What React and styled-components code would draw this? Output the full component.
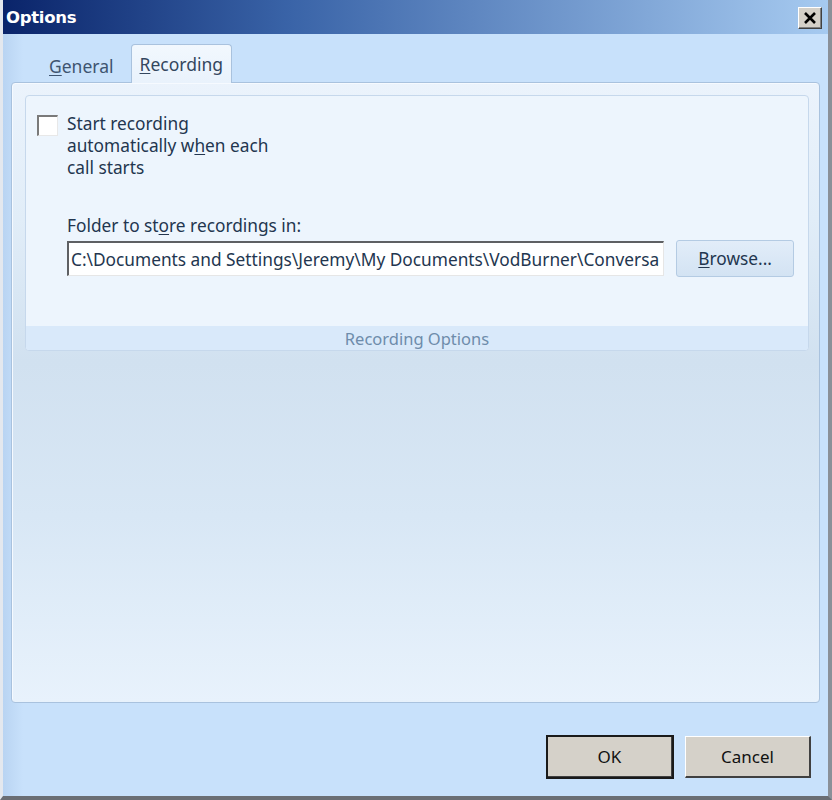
import React from "react";
import styled, { createGlobalStyle } from "styled-components";

const Global = createGlobalStyle`
  html, body { margin: 0; padding: 0; background: #c6dff9; }
  body { width: 832px; height: 800px; overflow: hidden; }
  * { box-sizing: border-box; }
`;

const Window = styled.div`
  width: 832px;
  height: 800px;
  display: flex;
  flex-direction: column;
  background: #c7e0fa;
  border-left: 3px solid #e4e8ee;
  border-right: 4px solid #8a9098;
  border-bottom: 4px solid #6a6e74;
  font-family: "Noto Sans", "Open Sans", sans-serif;
`;

const TitleBar = styled.div`
  height: 34px;
  flex: none;
  display: flex;
  align-items: center;
  justify-content: space-between;
  padding: 0 6px 0 3px;
  background: linear-gradient(to right, #0a246a 0%, #3a64a8 35%, #a6caf0 100%);
`;

const Title = styled.span`
  color: #ffffff;
  font-family: "DejaVu Sans", sans-serif;
  font-weight: bold;
  font-size: 16.5px;
  letter-spacing: -0.3px;
  margin-top: 1px;
`;

const CloseButton = styled.div`
  width: 24px;
  height: 22px;
  margin-top: 2px;
  background: #d4d0c8;
  border-top: 1px solid #ffffff;
  border-left: 1px solid #ffffff;
  border-right: 1px solid #404040;
  border-bottom: 1px solid #404040;
  box-shadow: inset -1px -1px 0 #808080;
  display: flex;
  align-items: center;
  justify-content: center;
`;

const Body = styled.div`
  flex: 1;
  display: flex;
  flex-direction: column;
  padding: 10px 8px 0 8px;
  background: linear-gradient(to right, #b9d4f2 0px, #c8e1fb 20px, #c8e1fb 100%);
`;

const TabStrip = styled.div`
  display: flex;
  align-items: flex-end;
  padding-left: 36px;
  height: 38px;
  gap: 15px;
`;

const Tab = styled.div`
  height: ${(p) => (p.$active ? "39px" : "34px")};
  padding: 0 ${(p) => (p.$active ? "8px" : "1px")};
  display: flex;
  align-items: center;
  font-size: 17.5px;
  color: ${(p) => (p.$active ? "#34475f" : "#3e5470")};
  position: relative;
  z-index: 1;
  margin-bottom: ${(p) => (p.$active ? "-1px" : "0")};
  border: ${(p) => (p.$active ? "1px solid #a9c2de" : "1px solid transparent")};
  border-bottom: none;
  border-radius: 4px 4px 0 0;
  background: ${(p) =>
    p.$active ? "linear-gradient(to bottom, #f2f8fe, #e9f2fc)" : "transparent"};
`;

const Mn = styled.span`
  text-decoration: underline;
  text-underline-offset: 2px;
`;

const TabPanel = styled.div`
  height: 621px;
  border: 1px solid #a9c2de;
  border-radius: 4px;
  padding: 12px 10px 12px 13px;
  background: linear-gradient(
    to bottom,
    #ebf3fc 0%,
    #e1edf8 22%,
    #d1e1f0 45%,
    #d8e7f5 70%,
    #e8f2fc 100%
  );
  box-shadow: inset 1px 1px 0 #f6faff;
`;

const GroupBox = styled.div`
  height: 256px;
  display: flex;
  flex-direction: column;
  border: 1px solid #c6d8ec;
  border-radius: 4px;
  background: #edf5fd;
  overflow: hidden;
`;

const GroupContent = styled.div`
  flex: 1;
  padding: 17px 14px 0 11px;
  display: flex;
  flex-direction: column;
`;

const CheckRow = styled.div`
  display: flex;
  align-items: flex-start;
  gap: 9px;
`;

const CheckBox = styled.div`
  width: 21px;
  height: 21px;
  flex: none;
  margin-top: 2px;
  background: #ffffff;
  border-top: 2px solid #7a7a7a;
  border-left: 2px solid #7a7a7a;
  border-right: 1px solid #e8e8e8;
  border-bottom: 1px solid #e8e8e8;
`;

const Label = styled.div`
  font-size: 17.3px;
  line-height: 22px;
  color: #23364f;
`;

const FolderBlock = styled.div`
  margin-top: 36px;
  padding-left: 30px;
  display: flex;
  flex-direction: column;
  gap: 3px;
`;

const PathRow = styled.div`
  display: flex;
  align-items: center;
  gap: 12px;
`;

const PathInput = styled.div`
  width: 599px;
  height: 35px;
  background: #ffffff;
  border-top: 2px solid #5e6063;
  border-left: 2px solid #5e6063;
  border-right: 1px solid #e6e6e6;
  border-bottom: 1px solid #e6e6e6;
  padding: 0 0 0 2px;
  display: flex;
  align-items: center;
  overflow: hidden;
  white-space: nowrap;
  font-size: 17.3px;
  color: #23364f;
`;

const BrowseButton = styled.div`
  width: 118px;
  height: 37px;
  border: 1px solid #b4cbe3;
  border-radius: 3px;
  background: linear-gradient(to bottom, #e2edf9, #d3e3f3);
  display: flex;
  align-items: center;
  justify-content: center;
  font-size: 17.3px;
  color: #23364f;
`;

const GroupFooter = styled.div`
  height: 24px;
  flex: none;
  background: #d9e9fa;
  display: flex;
  align-items: center;
  justify-content: center;
  font-size: 16.5px;
  color: #6e8cab;
`;

const ButtonBar = styled.div`
  flex: 1;
  display: flex;
  justify-content: flex-end;
  align-items: flex-start;
  gap: 12px;
  padding: 33px 9px 0 0;
`;

const DialogButton = styled.div`
  width: 126px;
  height: 42px;
  display: flex;
  align-items: center;
  justify-content: center;
  background: #d5d1c9;
  font-size: 17px;
  color: #111111;
  border-top: 1px solid #ffffff;
  border-left: 1px solid #ffffff;
  border-right: 2px solid #404040;
  border-bottom: 2px solid #404040;
  outline: ${(p) => (p.$default ? "2px solid #1a1a1a" : "none")};
  outline-offset: -1px;
`;

export default function App() {
  return (
    <>
      <Global />
      <Window>
        <TitleBar>
          <Title>Options</Title>
          <CloseButton>
            <svg width="14" height="12" viewBox="0 0 14 12">
              <path d="M2 1 L12 11 M12 1 L2 11" stroke="#000" strokeWidth="2.6" />
            </svg>
          </CloseButton>
        </TitleBar>
        <Body>
          <TabStrip>
            <Tab>
              <span><Mn>G</Mn>eneral</span>
            </Tab>
            <Tab $active>
              <span><Mn>R</Mn>ecording</span>
            </Tab>
          </TabStrip>
          <TabPanel>
            <GroupBox>
              <GroupContent>
                <CheckRow>
                  <CheckBox />
                  <Label>
                    Start recording
                    <br />
                    automatically w<Mn>h</Mn>en each
                    <br />
                    call starts
                  </Label>
                </CheckRow>
                <FolderBlock>
                  <Label>
                    Folder to st<Mn>o</Mn>re recordings in:
                  </Label>
                  <PathRow>
                    <PathInput>
                      C:\Documents and Settings\Jeremy\My Documents\VodBurner\Conversa
                    </PathInput>
                    <BrowseButton>
                      <span><Mn>B</Mn>rowse...</span>
                    </BrowseButton>
                  </PathRow>
                </FolderBlock>
              </GroupContent>
              <GroupFooter>Recording Options</GroupFooter>
            </GroupBox>
          </TabPanel>
          <ButtonBar>
            <DialogButton $default>OK</DialogButton>
            <DialogButton>Cancel</DialogButton>
          </ButtonBar>
        </Body>
      </Window>
    </>
  );
}
